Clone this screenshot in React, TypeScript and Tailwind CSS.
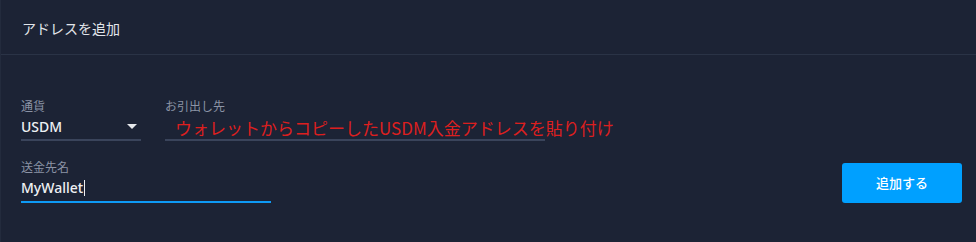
import React from "react";

export default function App() {
  return (
    <div
      className="w-[976px] h-[242px] bg-[#1c2335] text-[#e6e8ec] overflow-hidden border-l border-[#232b3d]"
      style={{ fontFamily: '"Noto Sans CJK JP", "Noto Sans", sans-serif' }}
    >
      <div className="h-[55px] flex items-center pl-[21px] border-b border-[#2a3346]">
        <span className="text-[14px] text-[#e2e5ea] leading-none mt-[1px]">アドレスを追加</span>
      </div>
      <div className="pl-[20px] pr-[14px] pt-[43px]">
        <div className="flex gap-[24px]">
          <div className="w-[120px] flex flex-col">
            <span className="text-[12px] leading-[16px] text-[#8b93a5]">通貨</span>
            <div className="h-[27px] flex items-center justify-between border-b-2 border-[#3a445b] pr-[3px]">
              <span className="text-[14px] font-medium text-[#eef0f3] leading-none" style={{ fontFamily: '"Noto Sans", "Noto Sans CJK JP", sans-serif' }}>USDM</span>
              <svg width="10" height="6" viewBox="0 0 10 6" className="mr-[1px]">
                <path d="M0 0 L10 0 L5 5 Z" fill="#e6e8ec" />
              </svg>
            </div>
          </div>
          <div className="w-[380px] flex flex-col">
            <span className="text-[12px] leading-[16px] text-[#8b93a5]">お引出し先</span>
            <div className="h-[27px] flex items-center border-b-2 border-[#3a445b]">
              <span className="text-[17px] leading-none text-[#dc1f1f] whitespace-nowrap ml-[10px] mt-[1px]">
                ウォレットからコピーしたUSDM入金アドレスを貼り付け
              </span>
            </div>
          </div>
        </div>
        <div className="flex items-end justify-between mt-[18px]">
          <div className="w-[250px] flex flex-col">
            <span className="text-[12px] leading-[16px] text-[#8b93a5]">送金先名</span>
            <div className="h-[28px] flex items-center border-b-2 border-[#0e9af5]">
              <span className="text-[14px] text-[#eef0f3] leading-none font-medium" style={{ fontFamily: '"Noto Sans", "Noto Sans CJK JP", sans-serif' }}>MyWallet</span>
              <span className="w-px h-[16px] bg-[#eef0f3] ml-px" />
            </div>
          </div>
          <button className="w-[120px] h-[40px] rounded-[3px] bg-[#00a0ff] text-white text-[13px] font-medium">
            追加する
          </button>
        </div>
      </div>
    </div>
  );
}
